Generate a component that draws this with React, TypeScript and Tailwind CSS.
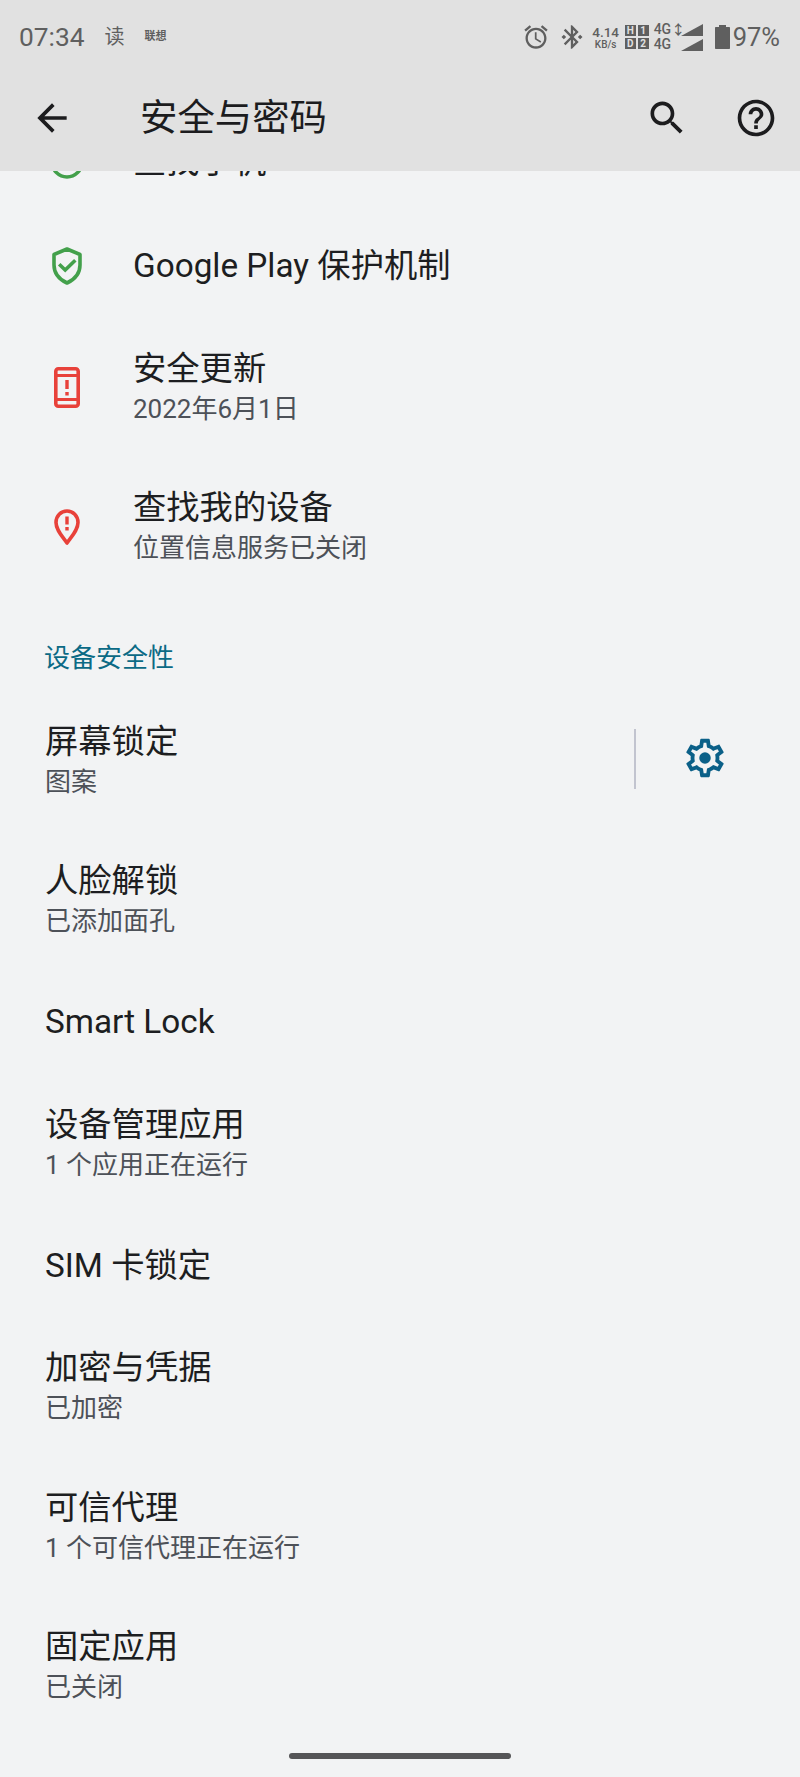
import * as React from "react";

const FONT = "font-['Roboto','Noto_Sans_CJK_SC',sans-serif]";

function ArrowBack() {
  return (
    <svg viewBox="0 0 24 24" className="h-[44px] w-[44px] fill-[#1c1c1e]">
      <path d="M20 11H7.83l5.59-5.59L12 4l-8 8 8 8 1.41-1.41L7.83 13H20v-2z" />
    </svg>
  );
}

function SearchIcon() {
  return (
    <svg viewBox="0 0 24 24" className="h-[44px] w-[44px] fill-[#1c1c1e]">
      <path d="M15.5 14h-.79l-.28-.27C15.41 12.59 16 11.11 16 9.5 16 5.91 13.09 3 9.5 3S3 5.91 3 9.5 5.91 16 9.5 16c1.61 0 3.09-.59 4.23-1.57l.27.28v.79l5 4.99L20.49 19l-4.99-5zm-6 0C7.01 14 5 11.99 5 9.5S7.01 5 9.5 5 14 7.01 14 9.5 11.99 14 9.5 14z" />
    </svg>
  );
}

function HelpIcon() {
  return (
    <svg viewBox="0 0 24 24" className="h-[44px] w-[44px] fill-[#1c1c1e]">
      <path d="M11 18h2v-2h-2v2zm1-16C6.48 2 2 6.48 2 12s4.48 10 10 10 10-4.48 10-10S17.52 2 12 2zm0 18c-4.41 0-8-3.59-8-8s3.59-8 8-8 8 3.59 8 8-3.59 8-8 8zm0-14c-2.21 0-4 1.79-4 4h2c0-1.1.9-2 2-2s2 .9 2 2c0 2-3 1.75-3 5h2c0-2.25 3-2.5 3-5 0-2.21-1.79-4-4-4z" />
    </svg>
  );
}

function GearIcon() {
  return (
    <svg viewBox="0 0 24 24" className="h-[46px] w-[46px] fill-[#0b6088]">
      <path d="M19.43 12.98c.04-.32.07-.64.07-.98 0-.34-.03-.66-.07-.98l2.11-1.65c.19-.15.24-.42.12-.64l-2-3.46c-.09-.16-.26-.25-.44-.25-.06 0-.12.01-.17.03l-2.49 1c-.52-.4-1.08-.73-1.69-.98l-.38-2.65C14.46 2.18 14.25 2 14 2h-4c-.25 0-.46.18-.49.42l-.38 2.65c-.61.25-1.17.59-1.69.98l-2.49-1c-.06-.02-.12-.03-.18-.03-.17 0-.34.09-.43.25l-2 3.46c-.13.22-.07.49.12.64l2.11 1.65c-.04.32-.07.65-.07.98 0 .33.03.66.07.98l-2.11 1.65c-.19.15-.24.42-.12.64l2 3.46c.09.16.26.25.44.25.06 0 .12-.01.17-.03l2.49-1c.52.4 1.08.73 1.69.98l.38 2.65c.03.24.24.42.49.42h4c.25 0 .46-.18.49-.42l.38-2.65c.61-.25 1.17-.59 1.69-.98l2.49 1c.06.02.12.03.18.03.17 0 .34-.09.43-.25l2-3.46c.12-.22.07-.49-.12-.64l-2.11-1.65zm-1.98-1.71c.04.31.05.52.05.73 0 .21-.02.43-.05.73l-.14 1.13.89.7 1.08.84-.7 1.21-1.27-.51-1.04-.42-.9.68c-.43.32-.84.56-1.25.73l-1.06.43-.16 1.13-.2 1.35h-1.4l-.19-1.35-.16-1.13-1.06-.43c-.43-.18-.83-.41-1.23-.71l-.91-.7-1.06.43-1.27.51-.7-1.21 1.08-.84.89-.7-.14-1.13c-.03-.31-.05-.54-.05-.74s.02-.43.05-.73l.14-1.13-.89-.7-1.08-.84.7-1.21 1.27.51 1.04.42.9-.68c.43-.32.84-.56 1.25-.73l1.06-.43.16-1.13.2-1.35h1.39l.19 1.35.16 1.13 1.06.43c.43.18.83.41 1.23.71l.91.7 1.06-.43 1.27-.51.7 1.21-1.07.85-.89.7.14 1.13z" />
      <circle cx="12" cy="12" r="3" />
    </svg>
  );
}

function GreenRing() {
  return (
    <svg viewBox="0 0 34 34" className="h-[34px] w-[34px]" fill="none">
      <circle cx="17" cy="17" r="15" stroke="#43a04b" strokeWidth="3.5" />
    </svg>
  );
}

function ShieldCheck() {
  return (
    <svg viewBox="0 0 30 38" className="h-[38px] w-[30px]" fill="none" stroke="#43a04b" strokeWidth="3.6">
      <path d="M15 2 L28 7.5 V18 C28 26.5 22.5 32.5 15 36 C7.5 32.5 2 26.5 2 18 V7.5 Z" strokeLinejoin="round" />
      <path d="M8.5 18.5 L13.2 23 L22 14.5" strokeLinecap="square" />
    </svg>
  );
}

function PhoneAlert() {
  return (
    <svg viewBox="0 0 26 41" className="h-[41px] w-[26px]" fill="none">
      <rect x="1.8" y="1.8" width="22.4" height="37.4" rx="2.5" stroke="#e8413a" strokeWidth="3.6" />
      <path d="M2 8.5H24M2 32.5H24" stroke="#e8413a" strokeWidth="3" />
      <path d="M13 13V22M13 25V28.5" stroke="#e8413a" strokeWidth="3.4" />
    </svg>
  );
}

function PinAlert() {
  return (
    <svg viewBox="0 0 26 37" className="h-[37px] w-[26px]" fill="none">
      <path d="M13 34 C8 27 2 21 2 13.5 C2 6.8 7 2 13 2 C19 2 24 6.8 24 13.5 C24 21 18 27 13 34 Z" stroke="#e8413a" strokeWidth="3.6" strokeLinejoin="round" />
      <path d="M13 7.5V15.5M13 18V21.5" stroke="#e8413a" strokeWidth="3.4" />
    </svg>
  );
}

function StatusBar() {
  return (
    <div className="flex h-[60px] items-start justify-between pl-[19px] pr-[20px] pt-[22px] text-[#5f5f5f]">
      <div className="flex items-center">
        <span className="text-[26.3px] font-normal leading-[30px]">07:34</span>
        <span className="ml-[20px] text-[20px] leading-[30px]">读</span>
        <span className="ml-[20px] text-[11px] font-bold leading-[30px]">联想</span>
      </div>
      <div className="flex items-center">
        <svg viewBox="0 0 24 24" className="h-[28px] w-[28px] fill-[#5f5f5f]">
          <path d="M22 5.72l-4.6-3.86-1.29 1.53 4.6 3.86L22 5.72zM7.88 3.39L6.6 1.86 2 5.71l1.29 1.53 4.59-3.85zM12.5 8H11v6l4.75 2.85.75-1.23-4-2.37V8zM12 4c-4.97 0-9 4.03-9 9s4.02 9 9 9c4.97 0 9-4.03 9-9s-4.03-9-9-9zm0 16c-3.87 0-7-3.13-7-7s3.13-7 7-7 7 3.13 7 7-3.13 7-7 7z" />
        </svg>
        <svg viewBox="0 0 24 24" className="ml-[8px] h-[28px] w-[28px] fill-[#5f5f5f]">
          <path d="M7 12l-2-2-2 2 2 2 2-2zm10.71-4.29L12 2h-1v7.59L6.41 5 5 6.41 10.59 12 5 17.59 6.41 19 11 14.41V22h1l5.71-5.71-4.3-4.29 4.3-4.29zM13 5.83l1.88 1.88L13 9.59V5.83zm1.88 10.46L13 18.17v-3.76l1.88 1.88zM19 10l-2 2 2 2 2-2-2-2z" />
        </svg>
        <div className="ml-[5px] flex w-[30px] flex-col items-center leading-none">
          <span className="text-[13.5px] font-medium leading-[14px]">4.14</span>
          <span className="text-[10px] font-medium leading-[11px]">KB/s</span>
        </div>
        <div className="ml-[4px] grid grid-cols-2 gap-x-[2px] gap-y-[2px]">
          {["H", "1", "D", "2"].map((c) => (
            <span key={c} className="flex h-[11px] w-[11px] items-center justify-center bg-[#5f5f5f] text-[10px] font-bold leading-none text-[#e1e1e1]">
              {c}
            </span>
          ))}
        </div>
        <div className="ml-[5px] flex w-[27px] flex-col text-[14px] font-medium leading-[15px]">
          <span>4G↕</span>
          <span>4G</span>
        </div>
        <div className="flex flex-col gap-[3px]">
          <svg viewBox="0 0 22 12" className="h-[12px] w-[22px] fill-[#5f5f5f]"><path d="M0 12 L22 0 V12 Z" /></svg>
          <svg viewBox="0 0 22 12" className="h-[12px] w-[22px] fill-[#5f5f5f]"><path d="M0 12 L22 0 V12 Z" /></svg>
        </div>
        <svg viewBox="0 0 15 24" className="ml-[12px] h-[24px] w-[15px] fill-[#5f5f5f]">
          <path d="M4 0H11V2H14C14.6 2 15 2.4 15 3V23C15 23.6 14.6 24 14 24H1C.4 24 0 23.6 0 23V3C0 2.4 .4 2 1 2H4Z" />
        </svg>
        <span className="ml-[3px] text-[25.5px] leading-[30px]">97%</span>
      </div>
    </div>
  );
}

function AppBar() {
  return (
    <div className="flex h-[111px] items-start">
      <div className="ml-[30px] mt-[36px]"><ArrowBack /></div>
      <h1 className="ml-[66px] mt-[34px] text-[37.4px] font-normal leading-[48px] text-[#1c1c1e]">安全与密码</h1>
      <div className="ml-auto mr-[22px] mt-[36px] flex gap-[45px]">
        <SearchIcon />
        <HelpIcon />
      </div>
    </div>
  );
}

interface RowProps {
  title: string;
  sub?: string;
  icon?: React.ReactNode;
  action?: React.ReactNode;
}

function Row({ title, sub, icon, action }: RowProps) {
  return (
    <div className={`flex items-center ${sub ? "h-[139.5px]" : "h-[104px]"}`}>
      {icon !== undefined ? (
        <div className="flex w-[133px] shrink-0 justify-center">{icon}</div>
      ) : (
        <div className="w-[45px] shrink-0" />
      )}
      <div className="flex-1">
        <div className="text-[33.3px] leading-[42px] text-[#1d1e21]">{title}</div>
        {sub && <div className="text-[26px] leading-[38px] text-[#4d5158]">{sub}</div>}
      </div>
      {action}
    </div>
  );
}

const SECURITY_ROWS: RowProps[] = [
  { title: "人脸解锁", sub: "已添加面孔" },
  { title: "Smart Lock" },
  { title: "设备管理应用", sub: "1 个应用正在运行" },
  { title: "SIM 卡锁定" },
  { title: "加密与凭据", sub: "已加密" },
  { title: "可信代理", sub: "1 个可信代理正在运行" },
  { title: "固定应用", sub: "已关闭" },
];

export default function App() {
  return (
    <div className={`relative flex h-[1777px] w-[800px] flex-col overflow-hidden bg-[#f2f3f4] ${FONT}`}>
      <header className="relative z-10 shrink-0 bg-[#e1e1e1]">
        <StatusBar />
        <AppBar />
      </header>
      <main className="flex-1 overflow-hidden">
        {/* list is scrolled, first row sits partly under the header */}
        <div className="-mt-[61px]">
          <Row title="查找手机" icon={<GreenRing />} />
          <Row title="Google Play 保护机制" icon={<ShieldCheck />} />
          <Row title="安全更新" sub="2022年6月1日" icon={<PhoneAlert />} />
          <Row title="查找我的设备" sub="位置信息服务已关闭" icon={<PinAlert />} />
          <div className="pb-[15px] pl-[44px] pt-[43px] text-[26px] leading-[36px] text-[#0b6a85]">设备安全性</div>
          <Row
            title="屏幕锁定"
            sub="图案"
            action={
              <div className="mb-[3px] mr-[73px] flex items-center">
                <div className="h-[60px] w-[2px] bg-[#c2c4cf]" />
                <div className="mb-[2px] ml-[46px] -mr-[1px]"><GearIcon /></div>
              </div>
            }
          />
          {SECURITY_ROWS.map((r) => (
            <Row key={r.title} {...r} />
          ))}
        </div>
      </main>
      <div className="absolute bottom-[18px] left-[289px] h-[6px] w-[222px] rounded-full bg-[#555557]" />
    </div>
  );
}
